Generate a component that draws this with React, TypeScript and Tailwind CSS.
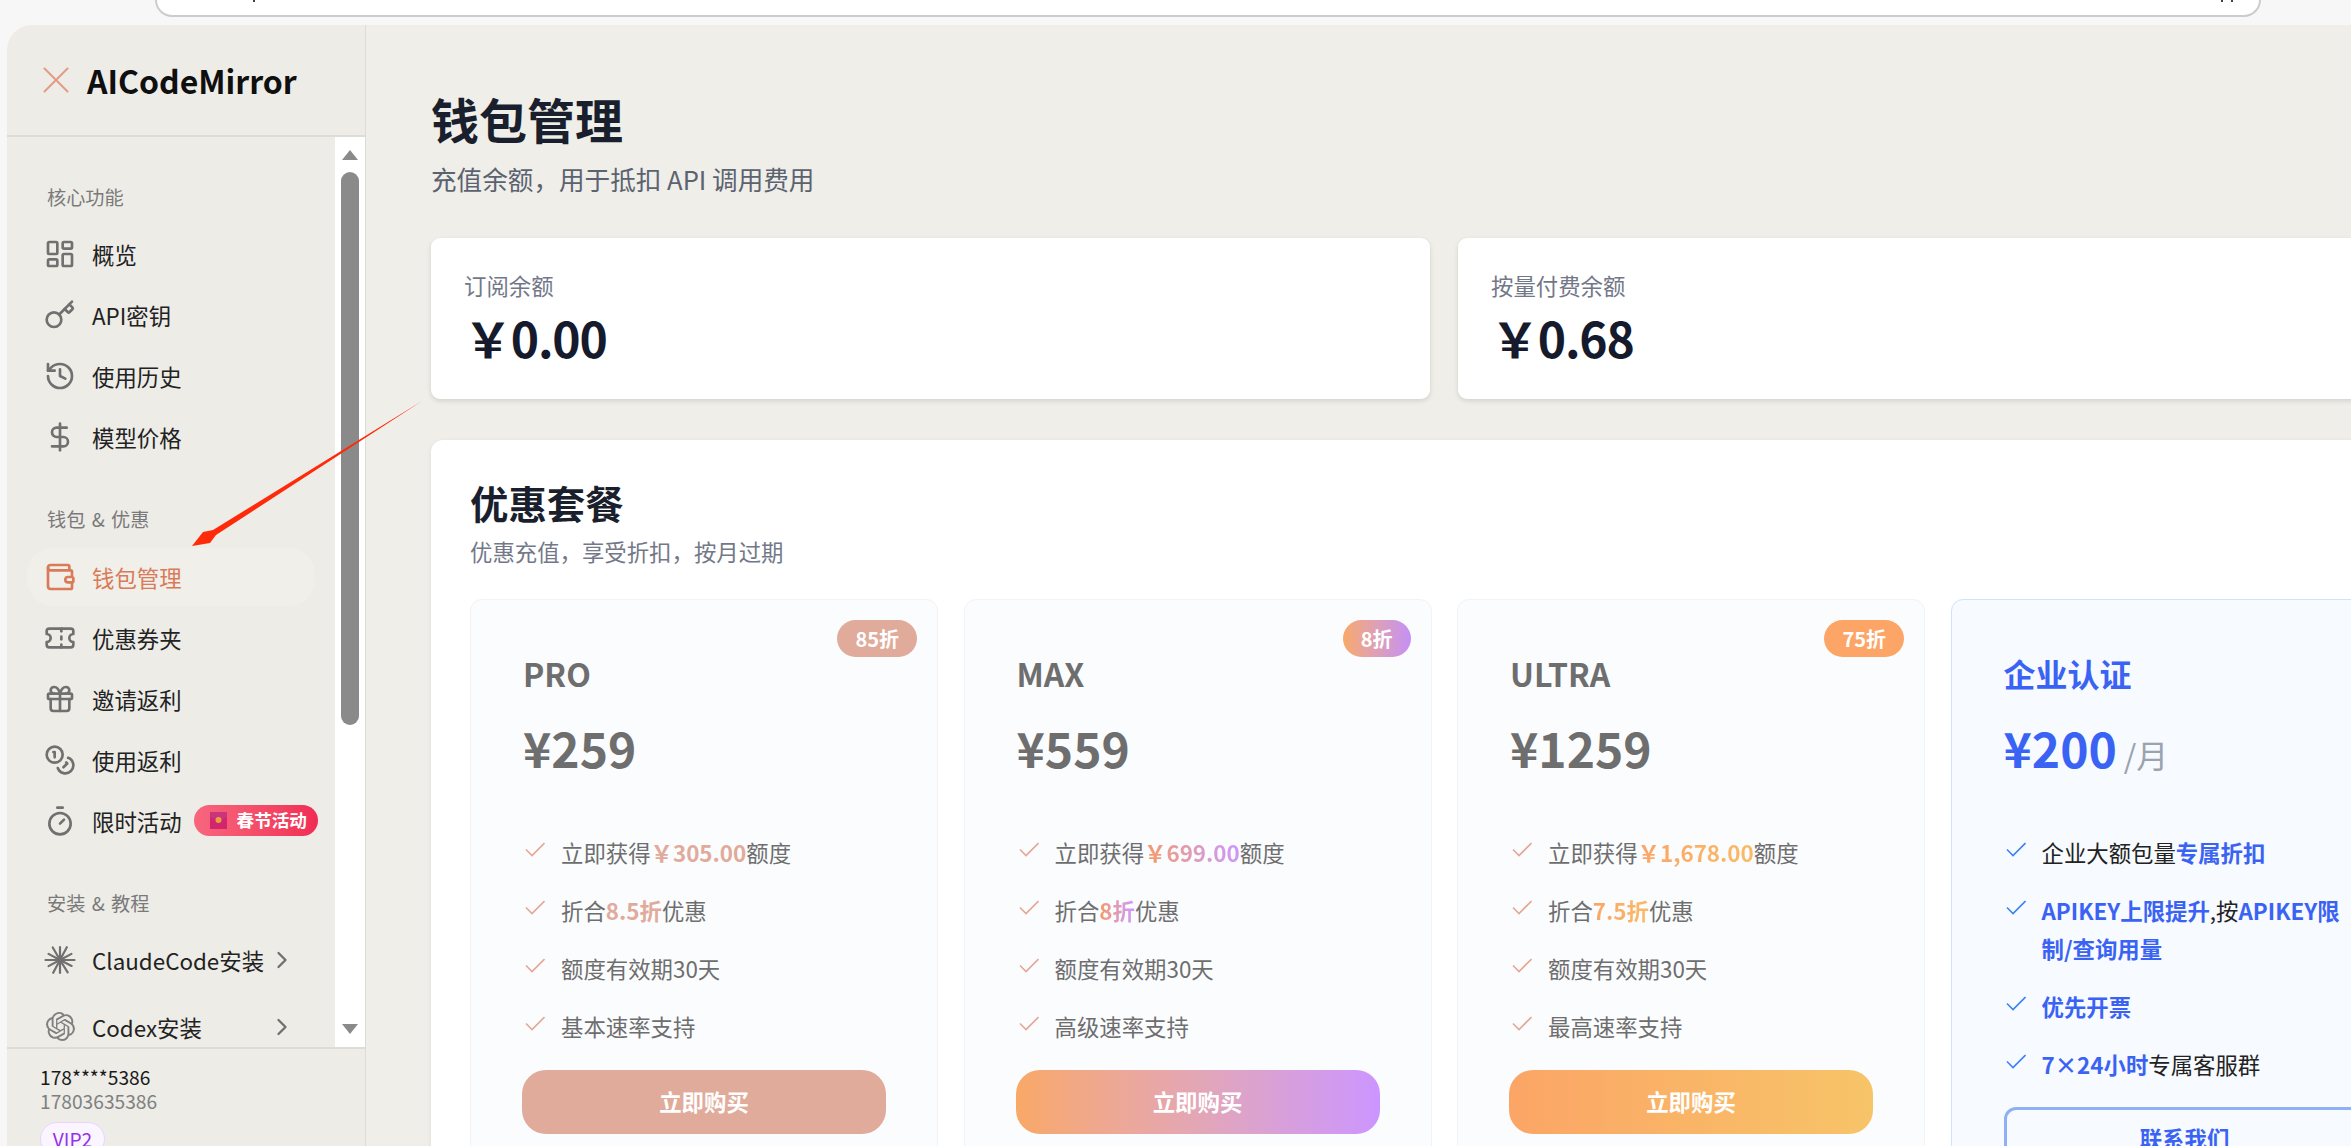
import React from "react";
import { ChevronRight, Coins, DollarSign, Gift, History, Key, LayoutDashboard, Ticket, Timer, Wallet, X } from "lucide-react";
import { SiOpenai } from "react-icons/si";

const CORE = [
  { icon: LayoutDashboard, label: "概览" },
  { icon: Key, label: "API密钥" },
  { icon: History, label: "使用历史" },
  { icon: DollarSign, label: "模型价格" },
];

const WALLET = [
  { icon: Wallet, label: "钱包管理", active: true },
  { icon: Ticket, label: "优惠券夹" },
  { icon: Gift, label: "邀请返利" },
  { icon: Coins, label: "使用返利" },
];

const PLANS = [
  {
    name: "PRO",
    price: "¥259",
    badge: "85折",
    badgeClass: "bg-[#e0ab9b] px-[18px]",
    accentClass: "text-[#e0ab9b]",
    buttonClass: "bg-[#e0ab9b]",
    amount: "\uFFE5305.00",
    rate: "8.5折",
    speed: "基本速率支持",
  },
  {
    name: "MAX",
    price: "¥559",
    badge: "8折",
    badgeClass: "bg-linear-to-r from-[#f9a866] to-[#c58ff5] px-[18px]",
    accentClass: "bg-linear-to-r from-[#f59a5f] to-[#cc95ff] bg-clip-text text-transparent",
    buttonClass: "bg-linear-to-r from-[#f9a866] via-[#e3a6b6] to-[#cc95ff]",
    amount: "\uFFE5699.00",
    rate: "8折",
    speed: "高级速率支持",
  },
  {
    name: "ULTRA",
    price: "¥1259",
    badge: "75折",
    badgeClass: "bg-[#fca566] px-[18px]",
    accentClass: "bg-linear-to-r from-[#fba566] to-[#f8bb68] bg-clip-text text-transparent",
    buttonClass: "bg-linear-to-r from-[#fba566] to-[#f7c468]",
    amount: "\uFFE51,678.00",
    rate: "7.5折",
    speed: "最高速率支持",
  },
];

function CheckMark({ color }: { color: string }) {
  return (
    <svg width="20" height="15" viewBox="0 0 20 15" fill="none" className="mt-[9px] shrink-0">
      <path d="M1 7.5 L7 13.5 L19.5 1" stroke={color} strokeWidth="1.6" />
    </svg>
  );
}

function ClaudeStar() {
  const rays = [0, 27, 58, 90, 118, 152, 180, 208, 240, 270, 298, 332];
  return (
    <svg width="32" height="32" viewBox="0 0 32 32" className="shrink-0">
      {rays.map((deg, i) => (
        <line key={deg} x1="16" y1="16" x2={16 + (i % 2 ? 13 : 14.5)} y2="16" stroke="#707070" strokeWidth="2.2" strokeLinecap="round" transform={`rotate(${deg} 16 16)`} />
      ))}
    </svg>
  );
}

function OpenAiIcon() {
  return (
    <span className="flex w-[32px] shrink-0 justify-center">
      <SiOpenai size={29} color="#808080" />
    </span>
  );
}

function NavRow({ icon: Icon, label, active, children }: { icon: React.ElementType; label: string; active?: boolean; children?: React.ReactNode }) {
  return (
    <div className={`mx-[20px] flex h-[58px] items-center rounded-[26px] pl-[17px] ${active ? "bg-[#f0efe9] text-[#d97b58]" : "text-[#222222]"}`}>
      <Icon size={32} className={active ? "shrink-0 text-[#d97b58]" : "shrink-0 text-[#707070]"} />
      <span className="ml-[16px] whitespace-nowrap text-[22.4px] leading-[32px]">{label}</span>
      {children}
    </div>
  );
}

function SectionLabel({ children, className }: { children: React.ReactNode; className?: string }) {
  return <div className={`pl-[40px] text-[19.2px] leading-[28px] text-[#7a7a7a] [word-spacing:2px] ${className ?? ""}`}>{children}</div>;
}

function Sidebar() {
  return (
    <aside className="flex w-[359px] shrink-0 flex-col overflow-hidden rounded-tl-[25px] border-r border-[#dcdbd6] bg-[#edece7]">
      <div className="flex h-[112px] shrink-0 items-center gap-[8px] border-b-2 border-[#dddcd7] pl-[26px]">
        <X size={46} strokeWidth={1} className="text-[#e29c84]" />
        <span className="text-[32px] font-semibold leading-[44px] text-[#0f0f0f]">AICodeMirror</span>
      </div>

      <div className="flex min-h-0 flex-1">
        <nav className="w-[328px] shrink-0 overflow-hidden pt-[46px]">
          <SectionLabel>核心功能</SectionLabel>
          <div className="mt-[14px] flex flex-col gap-[3px]">
            {CORE.map((item) => (
              <NavRow key={item.label} {...item} />
            ))}
          </div>
          <SectionLabel className="mt-[39px]">钱包 &amp; 优惠</SectionLabel>
          <div className="mt-[14.500px] flex flex-col gap-[3px]">
            {WALLET.map((item) => (
              <NavRow key={item.label} {...item} />
            ))}
            <NavRow icon={Timer} label="限时活动">
              <span className="ml-[12px] flex h-[31px] w-[124px] shrink-0 items-center gap-[10px] rounded-full bg-linear-to-r from-[#f7667d] to-[#f12b55] pl-[16px] text-[17.6px] font-bold text-white">
                <svg width="17" height="17" viewBox="0 0 17 17" className="shrink-0">
                  <rect width="17" height="17" fill="#d1256f" />
                  <path d="M0 0h17v5L8.500 9 0 5z" fill="#c9347c" />
                  <circle cx="8.500" cy="8" r="3" fill="#e8a13a" />
                </svg>
                春节活动
              </span>
            </NavRow>
          </div>
          <SectionLabel className="mt-[39px]">安装 &amp; 教程</SectionLabel>
          <div className="mt-[14px] flex flex-col gap-[9px]">
            <NavRow icon={ClaudeStar} label="ClaudeCode安装">
              <ChevronRight size={28} className="ml-auto mr-[19px] shrink-0 text-[#707070]" />
            </NavRow>
            <NavRow icon={OpenAiIcon} label="Codex安装">
              <ChevronRight size={28} className="ml-auto mr-[19px] shrink-0 text-[#707070]" />
            </NavRow>
          </div>
        </nav>

        <div className="flex w-[30px] shrink-0 flex-col items-center bg-white pt-[13px]">
          <div className="h-0 w-0 border-x-[8px] border-b-[10px] border-x-transparent border-b-[#8a8a8a]" />
          <div className="mt-[12px] h-[553px] w-[18px] rounded-[9px] bg-[#8a8a8a]" />
          <div className="mt-auto mb-[13px] h-0 w-0 border-x-[8px] border-t-[10px] border-x-transparent border-t-[#8a8a8a]" />
        </div>
      </div>

      <div className="h-[99px] shrink-0 overflow-hidden border-t-2 border-[#dddcd7] pl-[33px] pt-[16px]">
        <div className="text-[19.2px] leading-[24px] text-[#1a1a1a]">178****5386</div>
        <div className="text-[19.2px] leading-[24px] text-[#808080]">17803635386</div>
        <div className="mt-[9px] flex h-[34px] w-[65px] items-center justify-center rounded-full border border-[#e9d5ff] bg-[#faf5ff] text-[19.2px] text-[#9333ea]">VIP2</div>
      </div>
    </aside>
  );
}

function BalanceCard({ label, value }: { label: string; value: string }) {
  return (
    <div className="h-[161px] w-[999px] shrink-0 rounded-[9px] bg-white pl-[33px] pt-[31px] shadow-[0_2px_5px_rgba(0,0,0,0.12)]">
      <div className="text-[22.4px] leading-[32px] text-[#737888]">{label}</div>
      <div className="mt-[8px] text-[48px] font-bold leading-[56px] tracking-tight text-[#151a2c]">{value}</div>
    </div>
  );
}

function PlanCard({ plan }: { plan: (typeof PLANS)[number] }) {
  const rows = [
    <>立即获得<span className={`font-bold ${plan.accentClass}`}>{plan.amount}</span>额度</>,
    <>折合<span className={`font-bold ${plan.accentClass}`}>{plan.rate}</span>优惠</>,
    <>额度有效期30天</>,
    <>{plan.speed}</>,
  ];
  return (
    <div className="relative w-[468px] shrink-0 rounded-[12px] border border-[#f2f3f6] bg-[#fbfcfe] px-[52px] pb-[40px] pt-[51px]">
      <span className={`absolute right-[20px] top-[20px] flex h-[37px] items-center rounded-full text-[20px] font-bold text-white ${plan.badgeClass}`}>{plan.badge}</span>
      <div className="text-[32px] font-semibold leading-[44px] text-[#6e6e6e]">{plan.name}</div>
      <div className="mt-[20px] text-[48px] font-bold leading-[64px] text-[#6e6e6e]">{plan.price}</div>
      <ul className="mt-[53.500px] flex flex-col gap-[20px] pl-[2px]">
        {rows.map((row, i) => (
          <li key={i} className="flex gap-[16px] text-[22.4px] leading-[38px] text-[#6e6e6e]">
            <CheckMark color="#e4a894" />
            <span>{row}</span>
          </li>
        ))}
      </ul>
      <button className="-ml-[1px] mt-[25.500px] h-[64px] w-[364px] text-[22.4px] font-bold text-white">
        <span className={`flex h-full w-full items-center justify-center rounded-[24px] ${plan.buttonClass}`}>立即购买</span>
      </button>
    </div>
  );
}

function EnterpriseCard() {
  const blue = "font-semibold text-[#3a63f4]";
  const rows = [
    <>企业大额包量<span className={blue}>专属折扣</span></>,
    <><span className={blue}>APIKEY上限提升</span>,按<span className={blue}>APIKEY限<br />制/查询用量</span></>,
    <span className={blue}>优先开票</span>,
    <><span className={blue}>7×24小时</span>专属客服群</>,
  ];
  return (
    <div className="w-[468px] shrink-0 rounded-[12px] border border-[#cfe3fb] bg-[#f7fafe] px-[52px] pb-[40px] pt-[51px]">
      <div className="text-[32px] font-semibold leading-[44px] text-[#3a63f4]">企业认证</div>
      <div className="mt-[20px] flex h-[64px] items-baseline gap-[7px] leading-[64px]">
        <span className="text-[48px] font-bold text-[#3a63f4]">¥200</span>
        <span className="text-[32px] text-[#9aa3af]">/月</span>
      </div>
      <ul className="mt-[53.500px] flex flex-col gap-[20px] pl-[2px]">
        {rows.map((row, i) => (
          <li key={i} className="flex gap-[16px] whitespace-nowrap text-[22.4px] leading-[38px] text-[#222222]">
            <CheckMark color="#3b82f6" />
            <span>{row}</span>
          </li>
        ))}
      </ul>
      <button className="mt-[24px] h-[64px] w-[362px] rounded-[12px] border-[3px] border-[#8fb0f5] bg-[#f7fafe] text-[22.4px] font-semibold text-[#3a63f4]">联系我们</button>
    </div>
  );
}

export default function App() {
  return (
    <div className="relative flex h-screen w-full flex-col overflow-hidden bg-[#f7f7f7] font-['Noto_Sans_CJK_SC','Noto_Sans',sans-serif]">
      <div className="h-[25px] shrink-0">
        <div className="relative ml-[155px] h-[17px] w-[2106px] rounded-b-[28px] border-x-2 border-b-2 border-[#cccccc] bg-white">
          <span className="absolute left-[96px] top-0 h-[2px] w-[2px] bg-[#444444]" />
          <span className="absolute right-[36px] top-0 h-[2px] w-[2px] bg-[#444444]" />
          <span className="absolute right-[26px] top-0 h-[2px] w-[2px] bg-[#444444]" />
        </div>
      </div>

      <div className="flex min-h-0 flex-1 pl-[7px]">
        <Sidebar />
        <main className="min-w-0 flex-1 overflow-hidden bg-[#efeee8] pl-[65px] pt-[57px]">
          <h1 className="text-[48px] font-bold leading-[72px] text-[#1a1f2e]">钱包管理</h1>
          <p className="mt-[6.500px] text-[25.6px] leading-[36px] text-[#5b6270]">充值余额，用于抵扣 API 调用费用</p>

          <div className="mt-[41.500px] flex gap-[28px]">
            <BalanceCard label="订阅余额" value={"\uFFE50.00"} />
            <BalanceCard label="按量付费余额" value={"\uFFE50.68"} />
          </div>

          <section className="mt-[41px] w-[2030px] rounded-t-[12px] bg-white pb-[40px] pl-[39px] pt-[34px] shadow-[0_1px_4px_rgba(0,0,0,0.08)]">
            <h2 className="text-[38.4px] font-bold leading-[56px] text-[#1a1f2e]">优惠套餐</h2>
            <p className="mt-[5px] text-[22.4px] leading-[32px] text-[#737888]">优惠充值，享受折扣，按月过期</p>
            <div className="mt-[32px] flex gap-[25.5px]">
              {PLANS.map((plan) => (
                <PlanCard key={plan.name} plan={plan} />
              ))}
              <EnterpriseCard />
            </div>
          </section>
        </main>
      </div>

      <svg className="pointer-events-none absolute left-0 top-0" width="2351" height="1146" viewBox="0 0 2351 1146">
        <polygon points="422,401 213,530 203,532 192,546 210,543 216,535" fill="#ff2a0a" />
      </svg>
    </div>
  );
}
